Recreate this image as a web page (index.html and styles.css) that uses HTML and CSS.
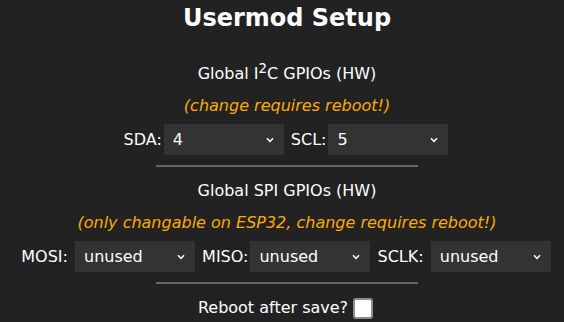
FILE: index.html
```html
<!DOCTYPE html>
<html lang="en">

<head>
    <meta charset="UTF-8">
    <meta name="viewport" content="width=device-width, initial-scale=1.0">

    <title>Usermod Setup</title>

    <link rel="stylesheet" href="styles.css">
</head>

<body>
    <form class="page">
        <h2>Usermod Setup</h2>
        Global I<sup>2</sup>C GPIOs (HW)<br>
        <i class="warn">(change requires reboot!)</i><br>
        SDA:<span class="pick"><select name="SDA"><option>4</option></select><svg class="arrow" viewBox="0 0 8 6"><path d="M1 1.2 L4 4.4 L7 1.2"/></svg></span>
        SCL:<span class="pick"><select name="SCL"><option>5</option></select><svg class="arrow" viewBox="0 0 8 6"><path d="M1 1.2 L4 4.4 L7 1.2"/></svg></span>
        <hr class="sml">
        Global SPI GPIOs (HW)<br>
        <i class="warn">(only changable on ESP32, change requires reboot!)</i><br>
        MOSI: <span class="pick"><select name="MOSI"><option>unused</option></select><svg class="arrow" viewBox="0 0 8 6"><path d="M1 1.2 L4 4.4 L7 1.2"/></svg></span>
        MISO:<span class="pick"><select name="MISO"><option>unused</option></select><svg class="arrow" viewBox="0 0 8 6"><path d="M1 1.2 L4 4.4 L7 1.2"/></svg></span>
        SCLK: <span class="pick"><select name="SCLK"><option>unused</option></select><svg class="arrow" viewBox="0 0 8 6"><path d="M1 1.2 L4 4.4 L7 1.2"/></svg></span>
        <hr class="sml">
        Reboot after save?<input type="checkbox" name="RBT" class="check"><br>
    </form>
</body>

</html>
```

FILE: styles.css
```css
body {
    margin: 0;
    padding-left: 10px;

    background: #222;
    color: #fff;

    font-family: "DejaVu Sans", Verdana, sans-serif;
    font-size: 16px;
    line-height: 32px;
    text-align: center;
}

h2 {
    margin: 1px 0 23px;

    font-size: 24px;
    line-height: 34px;
}

sup {
    line-height: 0;
}

.warn {
    color: #fa0;
}

hr {
    margin: 8px auto;

    border: 1px solid #666;
}

hr.sml {
    width: 260px;
}

.pick {
    position: relative;

    display: inline-flex;
    margin: 2px;
}

.pick select {
    width: 120px;
    height: 31px;

    padding: 0 0 0 9px;

    appearance: none;
    background: #333;
    color: #fff;

    font-family: inherit;
    font-size: 16px;
    line-height: normal;

    border: 0;
    border-radius: 0;
}

.arrow {
    position: absolute;
    right: 10px;
    top: 13px;

    width: 8px;
    height: 6px;

    pointer-events: none;

    fill: none;
    stroke: #fff;
    stroke-width: 1.5;
}

.check {
    box-sizing: border-box;
    width: 20px;
    height: 21px;

    margin: 0 3px 0 5px;

    appearance: none;
    background: #fff;

    border: 2.5px solid #8b8a98;
    border-radius: 3px;

    vertical-align: middle;
}
```
